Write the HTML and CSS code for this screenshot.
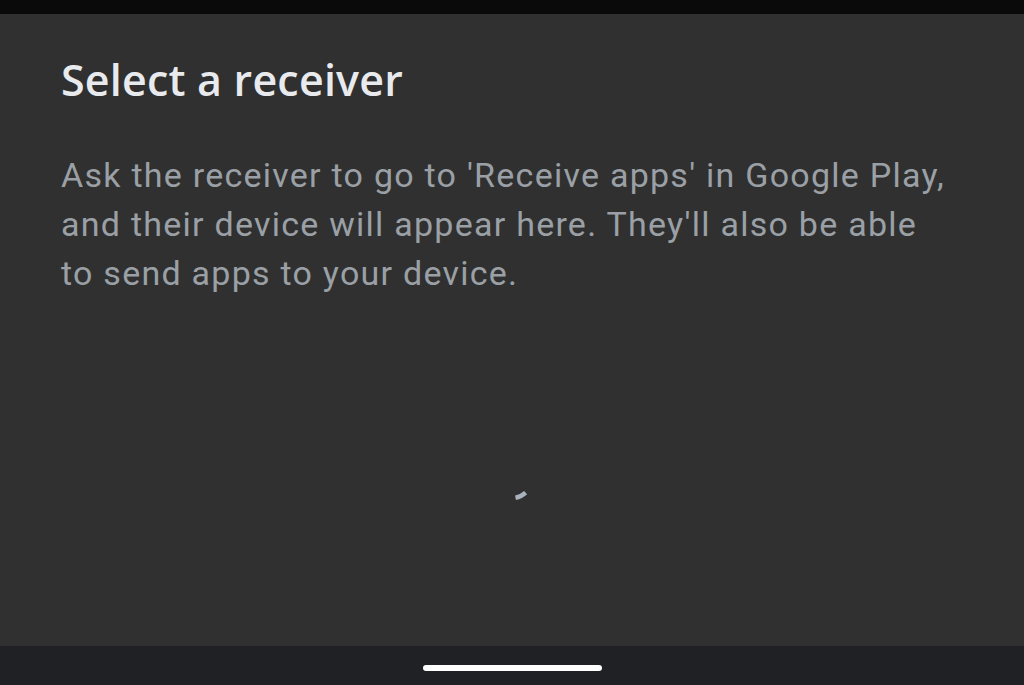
FILE: index.html
```html
<!DOCTYPE html>
<html>
<head>
<meta charset="utf-8">
<link rel="stylesheet" href="styles.css">
</head>
<body>
<div class="screen">
  <div class="status"></div>
  <main class="sheet">
    <h1 class="title">Select a receiver</h1>
    <p class="desc">Ask the receiver to go to 'Receive apps' in Google Play, and their device will appear here. They'll also be able to send apps to your device.</p>
    <div class="spin-wrap">
      <svg class="spinner" width="48" height="48" viewBox="0 0 48 48">
        <path d="M 37.6 38.6 A 20 20 0 0 1 27.5 43.7" fill="none" stroke="#a9b1bd" stroke-width="4.5" stroke-linecap="butt"/>
      </svg>
    </div>
  </main>
  <div class="navbar"><div class="handle"></div></div>
</div>
</body>
</html>
```
FILE: styles.css
```css
html, body { margin: 0; padding: 0; }
body { background: #303030; font-family: Roboto, "Noto Sans", sans-serif; }
.screen { width: 1024px; height: 685px; display: flex; flex-direction: column; overflow: hidden; }
.status { height: 14px; background: #0a0a0a; flex: none; }
.sheet { flex: 1; background: #303030; padding: 0 61px; display: flex; flex-direction: column; }
.title { margin: 41px 0 0; font-family: "Open Sans", Roboto, sans-serif; font-weight: 600; font-size: 43px; line-height: 50px; color: #e8eaed; letter-spacing: 0.2px; }
.desc { margin: 46px 0 0; font-size: 34px; line-height: 49px; color: #9aa0a6; letter-spacing: 1.25px; width: 892px; }
.spin-wrap { display: flex; justify-content: center; margin-top: 156px; margin-left: -61px; margin-right: -61px; }
.spinner { display: block; }
.navbar { height: 39px; background: #202124; flex: none; display: flex; justify-content: center; align-items: center; }
.handle { width: 179px; height: 6px; border-radius: 3px; background: #ffffff; margin-top: 4px; }
```
